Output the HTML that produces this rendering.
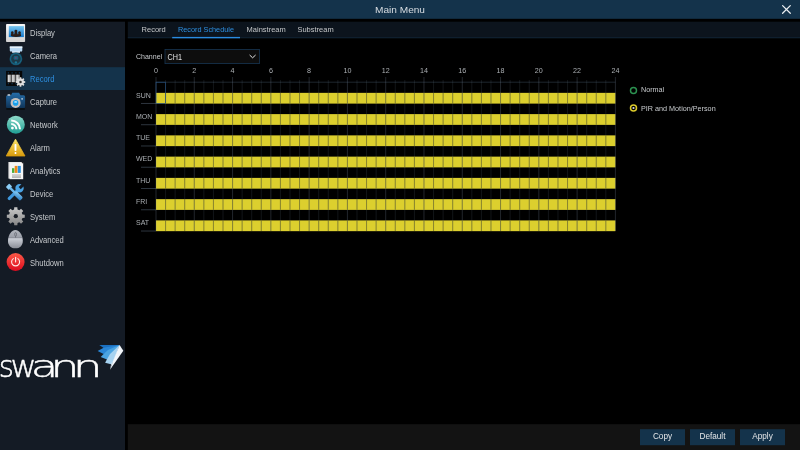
<!DOCTYPE html>
<html lang="en"><head><meta charset="utf-8"><title>Main Menu</title>
<style>html,body{margin:0;padding:0;background:#000;overflow:hidden}svg{display:block;filter:blur(0.4px)}</style>
</head><body>
<svg width="800" height="450" viewBox="0 0 800 450" font-family="Liberation Sans, sans-serif">
<defs>
<linearGradient id="gTeal" x1="0" y1="0" x2="0" y2="1"><stop offset="0" stop-color="#8fdccb"/><stop offset="1" stop-color="#1f9e93"/></linearGradient>
<linearGradient id="gRed" x1="0" y1="0" x2="0" y2="1"><stop offset="0" stop-color="#fb5a48"/><stop offset="1" stop-color="#dc0a1e"/></linearGradient>
<linearGradient id="gYel" x1="0" y1="0" x2="0" y2="1"><stop offset="0" stop-color="#ffe76a"/><stop offset="1" stop-color="#d79a0c"/></linearGradient>
<linearGradient id="gCam" x1="0" y1="0" x2="0" y2="1"><stop offset="0" stop-color="#256ca8"/><stop offset="1" stop-color="#0e3356"/></linearGradient>
<linearGradient id="gGrey" x1="0" y1="0" x2="0" y2="1"><stop offset="0" stop-color="#cacaca"/><stop offset="1" stop-color="#868686"/></linearGradient>
<linearGradient id="gMouse" x1="0" y1="0" x2="0" y2="1"><stop offset="0" stop-color="#cfd3db"/><stop offset="1" stop-color="#7f838d"/></linearGradient>
<linearGradient id="gTool" x1="0" y1="0" x2="1" y2="1"><stop offset="0" stop-color="#8fd0f6"/><stop offset="1" stop-color="#2378c2"/></linearGradient>
<linearGradient id="gDisp" x1="0" y1="0" x2="0" y2="1"><stop offset="0" stop-color="#78c6f0"/><stop offset="1" stop-color="#1278cc"/></linearGradient>
<linearGradient id="gFrame" x1="0" y1="0" x2="0" y2="1"><stop offset="0" stop-color="#f8f8f8"/><stop offset="1" stop-color="#d2d2d2"/></linearGradient>
</defs>
<rect width="800" height="450" fill="#000"/>
<rect x="0" y="0" width="800" height="18.8" fill="#14334b"/>
<rect x="0" y="21.7" width="125" height="428.3" fill="#141b25"/>
<rect x="127.8" y="21.7" width="672.2" height="16.5" fill="#0c141d"/>
<rect x="127.8" y="37.2" width="672.2" height="1" fill="#112433"/>
<rect x="127.8" y="424.2" width="672.2" height="25.8" fill="#131313"/>
<rect x="0" y="67.2" width="125" height="22.8" fill="#14334b"/>
<text transform="translate(400 12.5) scale(1.125 1)" font-size="9.0" fill="#d8dde2" text-anchor="middle" >Main Menu</text>
<path d="M782.6 5.6 L790.3 13.3 M790.3 5.6 L782.6 13.3" stroke="#eceff2" stroke-width="1.25" fill="none" stroke-linecap="round"/>
<text transform="translate(30 35.5) scale(0.885 1)" font-size="8.6" fill="#c6c9cc" text-anchor="start" >Display</text>
<text transform="translate(30 59.4) scale(0.885 1)" font-size="8.6" fill="#c6c9cc" text-anchor="start" >Camera</text>
<text transform="translate(30 82.3) scale(0.885 1)" font-size="8.6" fill="#2e8fe0" text-anchor="start" >Record</text>
<text transform="translate(30 104.7) scale(0.885 1)" font-size="8.6" fill="#c6c9cc" text-anchor="start" >Capture</text>
<text transform="translate(30 128.0) scale(0.885 1)" font-size="8.6" fill="#c6c9cc" text-anchor="start" >Network</text>
<text transform="translate(30 151.2) scale(0.885 1)" font-size="8.6" fill="#c6c9cc" text-anchor="start" >Alarm</text>
<text transform="translate(30 173.9) scale(0.885 1)" font-size="8.6" fill="#c6c9cc" text-anchor="start" >Analytics</text>
<text transform="translate(30 197.0) scale(0.885 1)" font-size="8.6" fill="#c6c9cc" text-anchor="start" >Device</text>
<text transform="translate(30 219.6) scale(0.885 1)" font-size="8.6" fill="#c6c9cc" text-anchor="start" >System</text>
<text transform="translate(30 243.4) scale(0.885 1)" font-size="8.6" fill="#c6c9cc" text-anchor="start" >Advanced</text>
<text transform="translate(30 266.2) scale(0.885 1)" font-size="8.6" fill="#c6c9cc" text-anchor="start" >Shutdown</text>
<g>
<rect x="6.05" y="24.05" width="19.05" height="17.95" rx="0.8" fill="url(#gFrame)"/>
<rect x="8.8" y="26.1" width="15.1" height="11" fill="url(#gDisp)"/>
<g fill="#2a1d19">
<ellipse cx="16" cy="35.6" rx="5.2" ry="1.3"/>
<circle cx="12.3" cy="32.5" r="1.2"/><path d="M11.4 32.6 h1.8 l0.6 3 h-3 z"/>
<circle cx="19.5" cy="32.5" r="1.2"/><path d="M18.6 32.6 h1.8 l0.6 3 h-3 z"/>
<circle cx="15.9" cy="31.1" r="1.45"/><path d="M14.8 31.2 h2.2 l0.8 4.4 h-3.8 z"/>
</g>
</g>
<g>
<path d="M9.8 46.5 h12.5 v3.9 q0 1.2 -1.4 1.2 h-0.9 v0.9 h-7.9 v-0.9 h-0.9 q-1.4 0 -1.4 -1.2 z" fill="#b8d9f4"/>
<rect x="9.8" y="46.5" width="12.5" height="1.6" fill="#e8f3fb"/><rect x="12.1" y="51.5" width="7.9" height="1" fill="#e4f0fa"/>
<radialGradient id="gDome" cx="0.5" cy="0.5" r="0.5"><stop offset="0" stop-color="#1b3644"/><stop offset="0.66" stop-color="#1c3b4b"/><stop offset="0.82" stop-color="#176482"/><stop offset="1" stop-color="#134e68"/></radialGradient>
<circle cx="15.9" cy="58.9" r="6.4" fill="url(#gDome)"/>
<rect x="13.6" y="56.1" width="4.7" height="3.7" rx="1.3" fill="#19607c"/>
<circle cx="15.9" cy="57.9" r="0.7" fill="#b02868"/>
<circle cx="15.9" cy="62.4" r="1.2" fill="#1a7898"/>
</g>
<g>
<rect x="6.1" y="70.9" width="16.1" height="15" fill="#060606"/>
<rect x="7.8" y="72.3" width="1.2" height="1.2" fill="#143a56"/>
<rect x="7.8" y="83.1" width="1.2" height="1.2" fill="#143a56"/>
<rect x="11.5" y="72.3" width="1.2" height="1.2" fill="#143a56"/>
<rect x="11.5" y="83.1" width="1.2" height="1.2" fill="#143a56"/>
<rect x="15.3" y="72.3" width="1.2" height="1.2" fill="#143a56"/>
<rect x="15.3" y="83.1" width="1.2" height="1.2" fill="#143a56"/>
<rect x="18.8" y="72.3" width="1.2" height="1.2" fill="#143a56"/>
<rect x="18.8" y="83.1" width="1.2" height="1.2" fill="#143a56"/>
<linearGradient id="gCyl" x1="0" y1="0" x2="1" y2="0"><stop offset="0" stop-color="#9a9a9a"/><stop offset="0.3" stop-color="#dedede"/><stop offset="1" stop-color="#7c7c7c"/></linearGradient>
<rect x="7.5" y="74.7" width="3.8" height="7.5" fill="url(#gCyl)"/>
<rect x="11.6" y="74.7" width="4.0" height="7.5" fill="url(#gCyl)"/>
<rect x="16.0" y="74.7" width="3.9" height="7.5" fill="url(#gCyl)"/>
<path d="M25.23 81.17 L25.23 82.83 L23.99 82.90 L23.60 83.83 L24.43 84.76 L23.26 85.93 L22.33 85.10 L21.40 85.49 L21.33 86.73 L19.67 86.73 L19.60 85.49 L18.67 85.10 L17.74 85.93 L16.57 84.76 L17.40 83.83 L17.01 82.90 L15.77 82.83 L15.77 81.17 L17.01 81.10 L17.40 80.17 L16.57 79.24 L17.74 78.07 L18.67 78.90 L19.60 78.51 L19.67 77.27 L21.33 77.27 L21.40 78.51 L22.33 78.90 L23.26 78.07 L24.43 79.24 L23.60 80.17 L23.99 81.10Z" fill="#dedede"/>
<circle cx="20.5" cy="82.0" r="1.25" fill="#303030"/>
</g>
<g>
<path d="M6.1 96.8 q0 -1.5 1.5 -1.5 h3.4 l1.3 -2.5 h6.8 l1.3 2.5 h3.2 q1.5 0 1.5 1.5 v10 q0 1.4 -1.4 1.4 h-16.2 q-1.4 0 -1.4 -1.4 z" fill="url(#gCam)"/>
<rect x="7.5" y="94.2" width="2.8" height="1.6" rx="0.5" fill="#c8d4de"/>
<rect x="6.4" y="108" width="18.4" height="2" fill="#0a0f12"/>
<circle cx="15.6" cy="102.9" r="5" fill="#c6c0bc"/>
<circle cx="15.6" cy="102.9" r="2.8" fill="#18a0ea"/>
<ellipse cx="15.6" cy="101.9" rx="1.5" ry="0.9" fill="#a8e2ff"/>
<rect x="21.4" y="98.2" width="1.4" height="1.4" fill="#dfe9f2"/>
</g>
<g transform="translate(0.2 0.3)">
<circle cx="15.6" cy="124.4" r="9" fill="url(#gTeal)"/>
<circle cx="12.2" cy="127.8" r="1.4" fill="#fff"/>
<path d="M11 123.8 a5.2 5.2 0 0 1 5.2 5.2" stroke="#fff" stroke-width="2" fill="none"/>
<path d="M11 120.2 a8.8 8.8 0 0 1 8.8 8.8" stroke="#fff" stroke-width="2" fill="none"/>
</g>
<g>
<path d="M15.5 139.2 L25 156 L6.2 156 Z" fill="url(#gYel)" stroke="url(#gYel)" stroke-width="0.8" stroke-linejoin="round"/>
<rect x="14.55" y="144" width="1.9" height="7" rx="0.7" fill="#fff"/>
<rect x="14.55" y="152" width="1.9" height="1.9" rx="0.7" fill="#fff"/>
</g>
<g>
<rect x="8.4" y="162" width="13.8" height="16.6" fill="#e2e2e2"/>
<rect x="9.6" y="162.7" width="13.6" height="16.5" fill="#f6f6f6"/>
<path d="M21.4 162 h1.8 v2 z" fill="#222"/>
<rect x="12" y="168.2" width="2.4" height="4.7" fill="#4caf3c"/>
<rect x="14.7" y="165.9" width="2.8" height="7" fill="#f08a18"/>
<rect x="17.8" y="165.9" width="3" height="7" fill="#2a92e0"/>
<linearGradient id="gBlk" x1="0" y1="0" x2="0" y2="1"><stop offset="0" stop-color="#d8d8d8"/><stop offset="1" stop-color="#b4b4b4"/></linearGradient>
<rect x="12" y="174" width="9" height="4" fill="url(#gBlk)"/>
</g>
<g transform="translate(15 192.8) rotate(-45)">
<rect x="-9.6" y="-1.6" width="14" height="3.2" rx="1.3" fill="#3f98de"/>
<circle cx="6.4" cy="0" r="4.2" fill="#4aa4e6"/>
<rect x="6.6" y="-1.5" width="5" height="3" fill="#141b25"/>
</g>
<g transform="translate(15 192.8) rotate(45)">
<rect x="-10.6" y="-2.4" width="4.2" height="4.8" rx="0.7" fill="#8ccdf6"/>
<rect x="-7" y="-1.2" width="7.4" height="2.4" fill="#6ab8ee"/>
<rect x="-0.6" y="-2.3" width="9.8" height="4.6" rx="1.5" fill="url(#gTool)"/>
</g>
<path d="M24.76 214.64 L24.76 217.76 L22.48 217.92 L21.74 219.71 L23.25 221.43 L21.03 223.65 L19.31 222.14 L17.52 222.88 L17.36 225.16 L14.24 225.16 L14.08 222.88 L12.29 222.14 L10.57 223.65 L8.35 221.43 L9.86 219.71 L9.12 217.92 L6.84 217.76 L6.84 214.64 L9.12 214.48 L9.86 212.69 L8.35 210.97 L10.57 208.75 L12.29 210.26 L14.08 209.52 L14.24 207.24 L17.36 207.24 L17.52 209.52 L19.31 210.26 L21.03 208.75 L23.25 210.97 L21.74 212.69 L22.48 214.48Z" fill="url(#gGrey)"/>
<circle cx="15.8" cy="216.2" r="2.1" fill="#1a1f27"/>
<g>
<linearGradient id="gM1" x1="0" y1="0" x2="0" y2="1"><stop offset="0" stop-color="#b2b6be"/><stop offset="0.43" stop-color="#9a9ea8"/><stop offset="0.45" stop-color="#cdd1d9"/><stop offset="1" stop-color="#8a8e97"/></linearGradient>
<path d="M15.4 230 c4.2 0 7.4 5.6 7.4 10.9 c0 4.6 -3 7.4 -7.4 7.4 c-4.4 0 -7.4 -2.8 -7.4 -7.4 c0 -5.3 3.2 -10.9 7.4 -10.9 z" fill="url(#gM1)"/>
<path d="M8.8 237.8 h13.6" stroke="#7c8089" stroke-width="0.6"/>
<path d="M15.6 236.2 v1.6" stroke="#5a5e68" stroke-width="0.6"/>
<ellipse cx="15.6" cy="234.3" rx="0.9" ry="1.9" fill="none" stroke="#50545e" stroke-width="0.6"/>
</g>
<g>
<circle cx="15.6" cy="262" r="9" fill="url(#gRed)"/>
<path d="M13.3 258.6 a4 4 0 1 0 4.6 0" stroke="#ffe9e6" stroke-width="1.1" fill="none" stroke-linecap="round"/>
<path d="M15.6 257.2 v4.8" stroke="#ffe9e6" stroke-width="1.1" stroke-linecap="round"/>
</g>
<text aria-label="swann" y="376.5" font-family="DejaVu Sans Light, DejaVu Sans, Liberation Sans, sans-serif" font-weight="200" font-size="30.7" fill="#fff" stroke="#fff" stroke-width="0.45"><tspan x="-1.19" textLength="15.22" lengthAdjust="spacingAndGlyphs">s</tspan><tspan x="10.46" textLength="26.02" lengthAdjust="spacingAndGlyphs">w</tspan><tspan x="30.72" textLength="27.48" lengthAdjust="spacingAndGlyphs">a</tspan><tspan x="50.44" textLength="28.92" lengthAdjust="spacingAndGlyphs">n</tspan><tspan x="72.78" textLength="29.84" lengthAdjust="spacingAndGlyphs">n</tspan></text>
<g>
<path d="M119.6 345 L99.3 344.9 L103.6 347.9 L112 349 Z" fill="#1b70c0"/>
<path d="M119.6 345 L103.6 347.7 L97.6 351.1 L103.6 354.1 L113 352 Z" fill="#2a86d6"/>
<path d="M119.6 345 L108 350 L103.6 353.9 L100.7 356.9 L107 359.5 L114 355 Z" fill="#4aa4e2"/>
<path d="M119.6 345 L110 354 L107 359.3 L105.1 362.7 L112 364.4 L116 356 Z" fill="#a6d2f0"/>
<path d="M119.6 345 L123.3 350.7 L110 369.8 L113.2 360.5 Z" fill="#f2f6fa"/>
<path d="M119.6 345 L113.2 360.5 L110 369.8 L111.6 362 L112 364 Z" fill="#d4e2ee"/>
</g>
<text x="141.6" y="31.55" font-size="7.5" fill="#c4c6c8" text-anchor="start" >Record</text>
<text x="178" y="31.55" font-size="7.3" fill="#2e8fe0" text-anchor="start" >Record Schedule</text>
<text x="246.6" y="31.55" font-size="7.5" fill="#c4c6c8" text-anchor="start" >Mainstream</text>
<text x="297.4" y="31.55" font-size="7.5" fill="#c4c6c8" text-anchor="start" >Substream</text>
<rect x="172.2" y="36.9" width="67.8" height="1.4" fill="#2a8be0"/>
<text transform="translate(136 58.5) scale(0.9 1)" font-size="7.8" fill="#c8cbce" text-anchor="start" >Channel</text>
<rect x="165" y="49.4" width="94.4" height="14.2" fill="#0d0d0d" stroke="#173552" stroke-width="0.8"/>
<text transform="translate(167.6 59.6) scale(0.87 1)" font-size="8.3" fill="#e0e0e0" text-anchor="start" >CH1</text>
<path d="M249.6 55 L252.6 57.8 L255.6 55" stroke="#e8e8e8" stroke-width="1" fill="none"/>
<text transform="translate(156.0 73.2) scale(0.92 1)" font-size="7.8" fill="#aaaeb2" text-anchor="middle" >0</text>
<text transform="translate(194.3 73.2) scale(0.92 1)" font-size="7.8" fill="#aaaeb2" text-anchor="middle" >2</text>
<text transform="translate(232.6 73.2) scale(0.92 1)" font-size="7.8" fill="#aaaeb2" text-anchor="middle" >4</text>
<text transform="translate(270.9 73.2) scale(0.92 1)" font-size="7.8" fill="#aaaeb2" text-anchor="middle" >6</text>
<text transform="translate(309.1 73.2) scale(0.92 1)" font-size="7.8" fill="#aaaeb2" text-anchor="middle" >8</text>
<text transform="translate(347.4 73.2) scale(0.92 1)" font-size="7.8" fill="#aaaeb2" text-anchor="middle" >10</text>
<text transform="translate(385.7 73.2) scale(0.92 1)" font-size="7.8" fill="#aaaeb2" text-anchor="middle" >12</text>
<text transform="translate(424.0 73.2) scale(0.92 1)" font-size="7.8" fill="#aaaeb2" text-anchor="middle" >14</text>
<text transform="translate(462.3 73.2) scale(0.92 1)" font-size="7.8" fill="#aaaeb2" text-anchor="middle" >16</text>
<text transform="translate(500.5 73.2) scale(0.92 1)" font-size="7.8" fill="#aaaeb2" text-anchor="middle" >18</text>
<text transform="translate(538.8 73.2) scale(0.92 1)" font-size="7.8" fill="#aaaeb2" text-anchor="middle" >20</text>
<text transform="translate(577.1 73.2) scale(0.92 1)" font-size="7.8" fill="#aaaeb2" text-anchor="middle" >22</text>
<text transform="translate(615.4 73.2) scale(0.92 1)" font-size="7.8" fill="#aaaeb2" text-anchor="middle" >24</text>
<rect x="156.0" y="92.85" width="459.4" height="10.76" fill="#dccf2e"/>
<text transform="translate(136 97.5) scale(0.9 1)" font-size="7.8" fill="#aaaeb2" text-anchor="start" >SUN</text>
<rect x="156.0" y="114.11" width="459.4" height="10.76" fill="#dccf2e"/>
<text transform="translate(136 118.8) scale(0.9 1)" font-size="7.8" fill="#aaaeb2" text-anchor="start" >MON</text>
<rect x="156.0" y="135.37" width="459.4" height="10.76" fill="#dccf2e"/>
<text transform="translate(136 140.1) scale(0.9 1)" font-size="7.8" fill="#aaaeb2" text-anchor="start" >TUE</text>
<rect x="156.0" y="156.63" width="459.4" height="10.76" fill="#dccf2e"/>
<text transform="translate(136 161.3) scale(0.9 1)" font-size="7.8" fill="#aaaeb2" text-anchor="start" >WED</text>
<rect x="156.0" y="177.89" width="459.4" height="10.76" fill="#dccf2e"/>
<text transform="translate(136 182.6) scale(0.9 1)" font-size="7.8" fill="#aaaeb2" text-anchor="start" >THU</text>
<rect x="156.0" y="199.15" width="459.4" height="10.76" fill="#dccf2e"/>
<text transform="translate(136 203.8) scale(0.9 1)" font-size="7.8" fill="#aaaeb2" text-anchor="start" >FRI</text>
<rect x="156.0" y="220.41" width="459.4" height="10.76" fill="#dccf2e"/>
<text transform="translate(136 225.1) scale(0.9 1)" font-size="7.8" fill="#aaaeb2" text-anchor="start" >SAT</text>
<path d="M156.0 82.2 H615.4" stroke="#2a3642" stroke-width="0.7"/>
<path d="M141 103.46 H156.0" stroke="#39434e" stroke-width="0.8"/>
<path d="M141 124.72 H156.0" stroke="#39434e" stroke-width="0.8"/>
<path d="M141 145.98 H156.0" stroke="#39434e" stroke-width="0.8"/>
<path d="M141 167.24 H156.0" stroke="#39434e" stroke-width="0.8"/>
<path d="M141 188.50 H156.0" stroke="#39434e" stroke-width="0.8"/>
<path d="M141 209.76 H156.0" stroke="#39434e" stroke-width="0.8"/>
<path d="M141 231.02 H156.0" stroke="#39434e" stroke-width="0.8"/>
<path d="M156.00 77 V231.02 M194.28 77 V231.02 M232.57 77 V231.02 M270.85 77 V231.02 M309.13 77 V231.02 M347.42 77 V231.02 M385.70 77 V231.02 M423.98 77 V231.02 M462.27 77 V231.02 M500.55 77 V231.02 M538.83 77 V231.02 M577.12 77 V231.02 M615.40 77 V231.02" stroke="#7c8da2" stroke-opacity="0.3" stroke-width="0.9" fill="none"/>
<path d="M165.57 80 V231.02 M175.14 80 V231.02 M184.71 80 V231.02 M203.85 80 V231.02 M213.43 80 V231.02 M223.00 80 V231.02 M242.14 80 V231.02 M251.71 80 V231.02 M261.28 80 V231.02 M280.42 80 V231.02 M289.99 80 V231.02 M299.56 80 V231.02 M318.70 80 V231.02 M328.27 80 V231.02 M337.85 80 V231.02 M356.99 80 V231.02 M366.56 80 V231.02 M376.13 80 V231.02 M395.27 80 V231.02 M404.84 80 V231.02 M414.41 80 V231.02 M433.55 80 V231.02 M443.12 80 V231.02 M452.70 80 V231.02 M471.84 80 V231.02 M481.41 80 V231.02 M490.98 80 V231.02 M510.12 80 V231.02 M519.69 80 V231.02 M529.26 80 V231.02 M548.40 80 V231.02 M557.97 80 V231.02 M567.55 80 V231.02 M586.69 80 V231.02 M596.26 80 V231.02 M605.83 80 V231.02" stroke="#7c8da2" stroke-opacity="0.19" stroke-width="0.8" fill="none"/>
<path d="M165.57 92.90 V103.46 M165.57 114.16 V124.72 M165.57 135.42 V145.98 M165.57 156.68 V167.24 M165.57 177.94 V188.50 M165.57 199.20 V209.76 M165.57 220.46 V231.02 M175.14 92.90 V103.46 M175.14 114.16 V124.72 M175.14 135.42 V145.98 M175.14 156.68 V167.24 M175.14 177.94 V188.50 M175.14 199.20 V209.76 M175.14 220.46 V231.02 M184.71 92.90 V103.46 M184.71 114.16 V124.72 M184.71 135.42 V145.98 M184.71 156.68 V167.24 M184.71 177.94 V188.50 M184.71 199.20 V209.76 M184.71 220.46 V231.02 M194.28 92.90 V103.46 M194.28 114.16 V124.72 M194.28 135.42 V145.98 M194.28 156.68 V167.24 M194.28 177.94 V188.50 M194.28 199.20 V209.76 M194.28 220.46 V231.02 M203.85 92.90 V103.46 M203.85 114.16 V124.72 M203.85 135.42 V145.98 M203.85 156.68 V167.24 M203.85 177.94 V188.50 M203.85 199.20 V209.76 M203.85 220.46 V231.02 M213.43 92.90 V103.46 M213.43 114.16 V124.72 M213.43 135.42 V145.98 M213.43 156.68 V167.24 M213.43 177.94 V188.50 M213.43 199.20 V209.76 M213.43 220.46 V231.02 M223.00 92.90 V103.46 M223.00 114.16 V124.72 M223.00 135.42 V145.98 M223.00 156.68 V167.24 M223.00 177.94 V188.50 M223.00 199.20 V209.76 M223.00 220.46 V231.02 M232.57 92.90 V103.46 M232.57 114.16 V124.72 M232.57 135.42 V145.98 M232.57 156.68 V167.24 M232.57 177.94 V188.50 M232.57 199.20 V209.76 M232.57 220.46 V231.02 M242.14 92.90 V103.46 M242.14 114.16 V124.72 M242.14 135.42 V145.98 M242.14 156.68 V167.24 M242.14 177.94 V188.50 M242.14 199.20 V209.76 M242.14 220.46 V231.02 M251.71 92.90 V103.46 M251.71 114.16 V124.72 M251.71 135.42 V145.98 M251.71 156.68 V167.24 M251.71 177.94 V188.50 M251.71 199.20 V209.76 M251.71 220.46 V231.02 M261.28 92.90 V103.46 M261.28 114.16 V124.72 M261.28 135.42 V145.98 M261.28 156.68 V167.24 M261.28 177.94 V188.50 M261.28 199.20 V209.76 M261.28 220.46 V231.02 M270.85 92.90 V103.46 M270.85 114.16 V124.72 M270.85 135.42 V145.98 M270.85 156.68 V167.24 M270.85 177.94 V188.50 M270.85 199.20 V209.76 M270.85 220.46 V231.02 M280.42 92.90 V103.46 M280.42 114.16 V124.72 M280.42 135.42 V145.98 M280.42 156.68 V167.24 M280.42 177.94 V188.50 M280.42 199.20 V209.76 M280.42 220.46 V231.02 M289.99 92.90 V103.46 M289.99 114.16 V124.72 M289.99 135.42 V145.98 M289.99 156.68 V167.24 M289.99 177.94 V188.50 M289.99 199.20 V209.76 M289.99 220.46 V231.02 M299.56 92.90 V103.46 M299.56 114.16 V124.72 M299.56 135.42 V145.98 M299.56 156.68 V167.24 M299.56 177.94 V188.50 M299.56 199.20 V209.76 M299.56 220.46 V231.02 M309.13 92.90 V103.46 M309.13 114.16 V124.72 M309.13 135.42 V145.98 M309.13 156.68 V167.24 M309.13 177.94 V188.50 M309.13 199.20 V209.76 M309.13 220.46 V231.02 M318.70 92.90 V103.46 M318.70 114.16 V124.72 M318.70 135.42 V145.98 M318.70 156.68 V167.24 M318.70 177.94 V188.50 M318.70 199.20 V209.76 M318.70 220.46 V231.02 M328.27 92.90 V103.46 M328.27 114.16 V124.72 M328.27 135.42 V145.98 M328.27 156.68 V167.24 M328.27 177.94 V188.50 M328.27 199.20 V209.76 M328.27 220.46 V231.02 M337.85 92.90 V103.46 M337.85 114.16 V124.72 M337.85 135.42 V145.98 M337.85 156.68 V167.24 M337.85 177.94 V188.50 M337.85 199.20 V209.76 M337.85 220.46 V231.02 M347.42 92.90 V103.46 M347.42 114.16 V124.72 M347.42 135.42 V145.98 M347.42 156.68 V167.24 M347.42 177.94 V188.50 M347.42 199.20 V209.76 M347.42 220.46 V231.02 M356.99 92.90 V103.46 M356.99 114.16 V124.72 M356.99 135.42 V145.98 M356.99 156.68 V167.24 M356.99 177.94 V188.50 M356.99 199.20 V209.76 M356.99 220.46 V231.02 M366.56 92.90 V103.46 M366.56 114.16 V124.72 M366.56 135.42 V145.98 M366.56 156.68 V167.24 M366.56 177.94 V188.50 M366.56 199.20 V209.76 M366.56 220.46 V231.02 M376.13 92.90 V103.46 M376.13 114.16 V124.72 M376.13 135.42 V145.98 M376.13 156.68 V167.24 M376.13 177.94 V188.50 M376.13 199.20 V209.76 M376.13 220.46 V231.02 M385.70 92.90 V103.46 M385.70 114.16 V124.72 M385.70 135.42 V145.98 M385.70 156.68 V167.24 M385.70 177.94 V188.50 M385.70 199.20 V209.76 M385.70 220.46 V231.02 M395.27 92.90 V103.46 M395.27 114.16 V124.72 M395.27 135.42 V145.98 M395.27 156.68 V167.24 M395.27 177.94 V188.50 M395.27 199.20 V209.76 M395.27 220.46 V231.02 M404.84 92.90 V103.46 M404.84 114.16 V124.72 M404.84 135.42 V145.98 M404.84 156.68 V167.24 M404.84 177.94 V188.50 M404.84 199.20 V209.76 M404.84 220.46 V231.02 M414.41 92.90 V103.46 M414.41 114.16 V124.72 M414.41 135.42 V145.98 M414.41 156.68 V167.24 M414.41 177.94 V188.50 M414.41 199.20 V209.76 M414.41 220.46 V231.02 M423.98 92.90 V103.46 M423.98 114.16 V124.72 M423.98 135.42 V145.98 M423.98 156.68 V167.24 M423.98 177.94 V188.50 M423.98 199.20 V209.76 M423.98 220.46 V231.02 M433.55 92.90 V103.46 M433.55 114.16 V124.72 M433.55 135.42 V145.98 M433.55 156.68 V167.24 M433.55 177.94 V188.50 M433.55 199.20 V209.76 M433.55 220.46 V231.02 M443.12 92.90 V103.46 M443.12 114.16 V124.72 M443.12 135.42 V145.98 M443.12 156.68 V167.24 M443.12 177.94 V188.50 M443.12 199.20 V209.76 M443.12 220.46 V231.02 M452.70 92.90 V103.46 M452.70 114.16 V124.72 M452.70 135.42 V145.98 M452.70 156.68 V167.24 M452.70 177.94 V188.50 M452.70 199.20 V209.76 M452.70 220.46 V231.02 M462.27 92.90 V103.46 M462.27 114.16 V124.72 M462.27 135.42 V145.98 M462.27 156.68 V167.24 M462.27 177.94 V188.50 M462.27 199.20 V209.76 M462.27 220.46 V231.02 M471.84 92.90 V103.46 M471.84 114.16 V124.72 M471.84 135.42 V145.98 M471.84 156.68 V167.24 M471.84 177.94 V188.50 M471.84 199.20 V209.76 M471.84 220.46 V231.02 M481.41 92.90 V103.46 M481.41 114.16 V124.72 M481.41 135.42 V145.98 M481.41 156.68 V167.24 M481.41 177.94 V188.50 M481.41 199.20 V209.76 M481.41 220.46 V231.02 M490.98 92.90 V103.46 M490.98 114.16 V124.72 M490.98 135.42 V145.98 M490.98 156.68 V167.24 M490.98 177.94 V188.50 M490.98 199.20 V209.76 M490.98 220.46 V231.02 M500.55 92.90 V103.46 M500.55 114.16 V124.72 M500.55 135.42 V145.98 M500.55 156.68 V167.24 M500.55 177.94 V188.50 M500.55 199.20 V209.76 M500.55 220.46 V231.02 M510.12 92.90 V103.46 M510.12 114.16 V124.72 M510.12 135.42 V145.98 M510.12 156.68 V167.24 M510.12 177.94 V188.50 M510.12 199.20 V209.76 M510.12 220.46 V231.02 M519.69 92.90 V103.46 M519.69 114.16 V124.72 M519.69 135.42 V145.98 M519.69 156.68 V167.24 M519.69 177.94 V188.50 M519.69 199.20 V209.76 M519.69 220.46 V231.02 M529.26 92.90 V103.46 M529.26 114.16 V124.72 M529.26 135.42 V145.98 M529.26 156.68 V167.24 M529.26 177.94 V188.50 M529.26 199.20 V209.76 M529.26 220.46 V231.02 M538.83 92.90 V103.46 M538.83 114.16 V124.72 M538.83 135.42 V145.98 M538.83 156.68 V167.24 M538.83 177.94 V188.50 M538.83 199.20 V209.76 M538.83 220.46 V231.02 M548.40 92.90 V103.46 M548.40 114.16 V124.72 M548.40 135.42 V145.98 M548.40 156.68 V167.24 M548.40 177.94 V188.50 M548.40 199.20 V209.76 M548.40 220.46 V231.02 M557.97 92.90 V103.46 M557.97 114.16 V124.72 M557.97 135.42 V145.98 M557.97 156.68 V167.24 M557.97 177.94 V188.50 M557.97 199.20 V209.76 M557.97 220.46 V231.02 M567.55 92.90 V103.46 M567.55 114.16 V124.72 M567.55 135.42 V145.98 M567.55 156.68 V167.24 M567.55 177.94 V188.50 M567.55 199.20 V209.76 M567.55 220.46 V231.02 M577.12 92.90 V103.46 M577.12 114.16 V124.72 M577.12 135.42 V145.98 M577.12 156.68 V167.24 M577.12 177.94 V188.50 M577.12 199.20 V209.76 M577.12 220.46 V231.02 M586.69 92.90 V103.46 M586.69 114.16 V124.72 M586.69 135.42 V145.98 M586.69 156.68 V167.24 M586.69 177.94 V188.50 M586.69 199.20 V209.76 M586.69 220.46 V231.02 M596.26 92.90 V103.46 M596.26 114.16 V124.72 M596.26 135.42 V145.98 M596.26 156.68 V167.24 M596.26 177.94 V188.50 M596.26 199.20 V209.76 M596.26 220.46 V231.02 M605.83 92.90 V103.46 M605.83 114.16 V124.72 M605.83 135.42 V145.98 M605.83 156.68 V167.24 M605.83 177.94 V188.50 M605.83 199.20 V209.76 M605.83 220.46 V231.02" stroke="#4a4a20" stroke-opacity="0.6" stroke-width="0.9" fill="none"/>
<rect x="156.0" y="82.2" width="9.57" height="21.26" fill="none" stroke="#25517e" stroke-width="0.7"/>
<circle cx="633.5" cy="90.5" r="3.0" fill="none" stroke="#2c9250" stroke-width="1.45"/>
<text transform="translate(641 92.4) scale(0.9 1)" font-size="8.0" fill="#c8cbce" text-anchor="start" >Normal</text>
<circle cx="633.5" cy="108" r="3.0" fill="none" stroke="#dccb2b" stroke-width="1.5"/>
<circle cx="633.5" cy="108" r="1.1" fill="#d4d8e4"/>
<text transform="translate(641 110.7) scale(0.915 1)" font-size="7.9" fill="#c8cbce" text-anchor="start" >PIR and Motion/Person</text>
<rect x="640" y="429.2" width="45" height="16" fill="#14334b"/>
<text x="662.5" y="438.9" font-size="8.2" fill="#e4e6e8" text-anchor="middle" >Copy</text>
<rect x="690" y="429.2" width="45" height="16" fill="#14334b"/>
<text x="712.5" y="439.4" font-size="8.2" fill="#e4e6e8" text-anchor="middle" >Default</text>
<rect x="740" y="429.2" width="45" height="16" fill="#14334b"/>
<text x="762.5" y="438.9" font-size="8.2" fill="#e4e6e8" text-anchor="middle" >Apply</text>
</svg>
</body></html>
